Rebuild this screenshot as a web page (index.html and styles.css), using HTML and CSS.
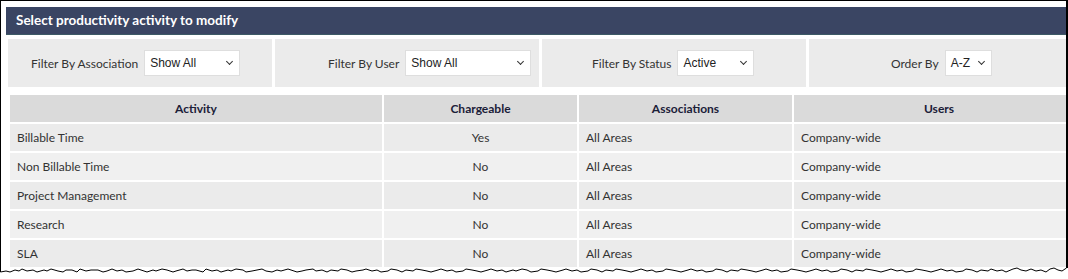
FILE: index.html
```html
<!DOCTYPE html>
<html lang="en">
<head>
    <meta charset="UTF-8">
    <title>Productivity Activities</title>
    <link rel="stylesheet" href="styles.css">
</head>
<body>
    <div class="frame">
        <div class="title-bar">Select productivity activity to modify</div>

        <div class="filters">
            <div class="filter f-assoc">
                <label>Filter By Association</label>
                <div class="select w-assoc"><span>Show All</span><i class="chev"></i></div>
            </div>
            <div class="filter f-user">
                <label>Filter By User</label>
                <div class="select w-user"><span>Show All</span><i class="chev"></i></div>
            </div>
            <div class="filter f-status">
                <label>Filter By Status</label>
                <div class="select w-status"><span>Active</span><i class="chev"></i></div>
            </div>
            <div class="filter f-order">
                <label>Order By</label>
                <div class="select w-order"><span>A-Z</span><i class="chev"></i></div>
            </div>
        </div>

        <table class="activities">
            <colgroup>
                <col class="c-activity">
                <col class="c-charge">
                <col class="c-assoc">
                <col class="c-users">
            </colgroup>
            <thead>
                <tr>
                    <th>Activity</th>
                    <th>Chargeable</th>
                    <th>Associations</th>
                    <th>Users</th>
                </tr>
            </thead>
            <tbody>
                <tr>
                    <td>Billable Time</td>
                    <td class="center">Yes</td>
                    <td>All Areas</td>
                    <td>Company-wide</td>
                </tr>
                <tr>
                    <td>Non Billable Time</td>
                    <td class="center">No</td>
                    <td>All Areas</td>
                    <td>Company-wide</td>
                </tr>
                <tr>
                    <td>Project Management</td>
                    <td class="center">No</td>
                    <td>All Areas</td>
                    <td>Company-wide</td>
                </tr>
                <tr>
                    <td>Research</td>
                    <td class="center">No</td>
                    <td>All Areas</td>
                    <td>Company-wide</td>
                </tr>
                <tr>
                    <td>SLA</td>
                    <td class="center">No</td>
                    <td>All Areas</td>
                    <td>Company-wide</td>
                </tr>
            </tbody>
        </table>
    </div>

    <svg class="torn" width="1068" height="11" viewBox="0 0 1068 11">
        <polyline fill="none" stroke="#000" stroke-width="1"
            points="0.5,0 0.5,5 6,4 10,5 15,3 19,4 22,2 27,4 33,3 37,5 44,3 47,4 51,2 58,4 63,5 66,3 72,3 77,5 80,2 86,4 91,3 98,3 103,5 107,4 112,2 117,4 122,3 126,5 133,4 138,2 141,3 147,5 153,3 156,4 162,2 167,3 173,5 176,4 183,2 187,4 192,3 196,3 203,5 206,2 212,4 217,3 221,5 228,3 231,4 236,2 243,3 246,5 252,4 257,3 262,2 266,4 272,5 277,3 281,4 288,2 291,3 297,5 302,4 306,3 313,2 316,4 322,3 327,5 331,3 338,4 341,2 347,3 352,5 356,4 363,3 366,2 372,4 377,3 381,5 388,4 391,2 397,3 402,5 406,3 413,4 416,2 422,3 427,4 431,5 438,3 441,2 447,4 452,3 456,5 463,4 466,2 472,3 477,4 481,5 488,3 491,2 497,4 502,3 506,5 513,3 516,4 522,2 527,3 531,5 538,4 541,2 547,3 552,4 556,5 563,3 566,2 572,4 577,3 581,5 588,4 591,2 597,3 602,5 606,3 613,4 616,2 622,3 627,4 631,5 638,3 641,2 647,4 652,3 656,5 663,4 666,2 672,3 677,4 681,5 688,3 691,2 697,4 702,3 706,5 713,4 716,2 722,3 727,5 731,3 738,4 741,2 747,3 752,4 756,5 763,3 766,2 772,4 777,3 781,5 788,4 791,2 797,3 802,4 806,5 813,3 816,2 822,4 827,3 831,5 838,4 841,2 847,3 852,5 856,3 863,4 866,2 872,3 877,4 881,5 888,3 891,2 897,4 902,3 906,5 913,4 916,2 922,3 927,4 931,5 938,3 941,2 947,4 952,3 956,5 963,4 966,2 972,3 977,5 981,3 988,4 991,2 997,4 1002,3 1006,5 1013,2 1017,1 1021,3 1026,4 1031,2 1036,4 1041,3 1046,5 1050,2 1054,1 1058,3 1062,4 1066.5,1 1066.5,0"/>
    </svg>
</body>
</html>
```

FILE: styles.css
```css
* {
    box-sizing: border-box;
}
body {
    margin: 0;
    background-color: #fff;
    font-family: Lato, "Open Sans", Arial, sans-serif;
    font-size: 12px;
    color: #333;
}
.frame {
    width: 1068px;
    height: 268px;
    border-top: 1px solid #000;
    border-left: 1px solid #000;
    border-right: 2px solid #000;
    padding-top: 6px;
    overflow: hidden;
}
.title-bar {
    margin-left: 5px;
    height: 28px;
    line-height: 27px;
    padding-left: 10px;
    background-color: #3a4563;
    border-bottom: 1px solid #3d5a66;
    color: #fff;
    font-weight: 700;
    font-size: 13.5px;
    white-space: nowrap;
}
.filters {
    display: grid;
    grid-template-columns: 264px 264px 264px 264px;
    column-gap: 3px;
    margin: 4px 0 0 7px;
    width: 1100px;
}
.filter {
    height: 48px;
    background-color: #ebebeb;
    display: flex;
    align-items: center;
    gap: 6px;
}
.f-assoc { padding-left: 23px; }
.f-user { padding-left: 53px; }
.f-status { padding-left: 50px; }
.f-order { padding-left: 82px; }
.filter label {
    font-size: 12px;
    color: #333;
    white-space: nowrap;
}
.select {
    height: 26px;
    background-color: #fff;
    border: 1px solid #dedede;
    display: flex;
    align-items: center;
    justify-content: space-between;
    padding: 0 7px 0 5px;
    font-family: "Liberation Sans", Arial, sans-serif;
    font-size: 12px;
    color: #222;
}
.w-assoc { width: 96px; }
.w-user { width: 126px; }
.w-status { width: 77px; }
.w-order { width: 47px; }
.chev {
    width: 5px;
    height: 5px;
    border-right: 1.3px solid #333;
    border-bottom: 1.3px solid #333;
    transform: rotate(45deg);
    margin-top: -3px;
}
.activities {
    border-collapse: separate;
    border-spacing: 2px;
    table-layout: fixed;
    width: 1078px;
    margin: 6px 0 0 7px;
}
.c-activity { width: 372px; }
.c-charge { width: 193px; }
.c-assoc { width: 213px; }
.c-users { width: 290px; }
.activities th {
    height: 27px;
    background-color: #dadada;
    color: #1b2038;
    font-weight: 700;
    font-size: 12px;
    text-align: center;
    padding: 0;
}
.activities td {
    height: 27px;
    padding: 0 7px;
    font-size: 12px;
    color: #333;
    white-space: nowrap;
}
.activities tbody tr:nth-child(odd) td {
    background-color: #ebebeb;
}
.activities tbody tr:nth-child(even) td {
    background-color: #f0f0f0;
}
.activities td.center {
    text-align: center;
}
.torn {
    display: block;
    margin-top: -1px;
}
```
